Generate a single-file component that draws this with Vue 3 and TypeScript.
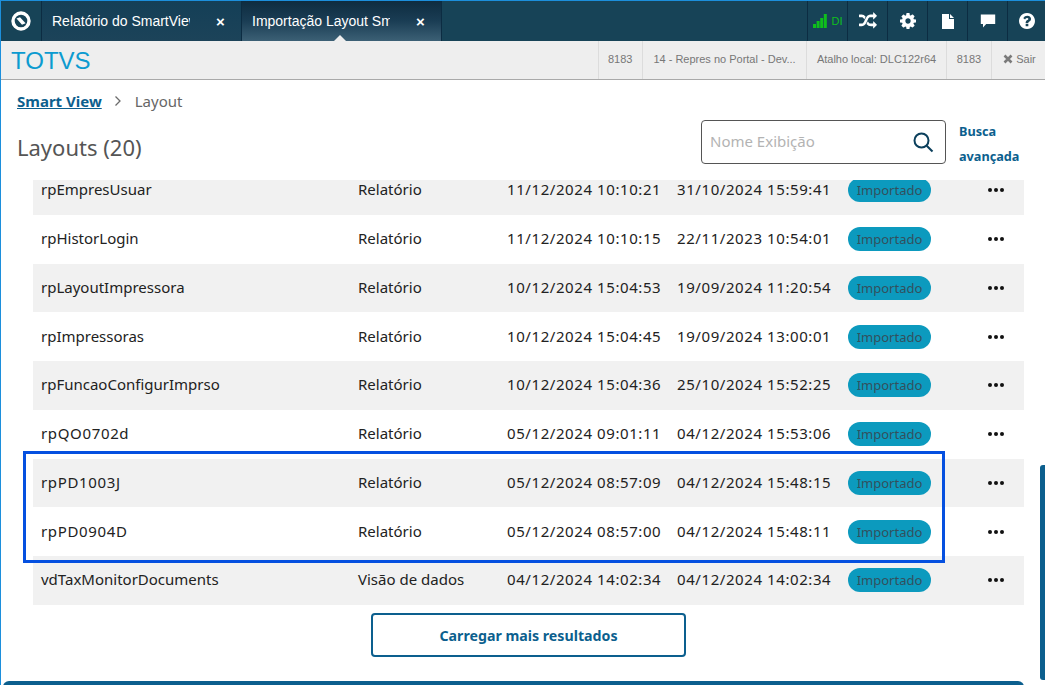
<script setup lang="ts">
interface Row { name: string; type: string; created: string; updated: string }
const rows: Row[] = [
  { name: 'rpEmpresUsuar', type: 'Relatório', created: '11/12/2024 10:10:21', updated: '31/10/2024 15:59:41' },
  { name: 'rpHistorLogin', type: 'Relatório', created: '11/12/2024 10:10:15', updated: '22/11/2023 10:54:01' },
  { name: 'rpLayoutImpressora', type: 'Relatório', created: '10/12/2024 15:04:53', updated: '19/09/2024 11:20:54' },
  { name: 'rpImpressoras', type: 'Relatório', created: '10/12/2024 15:04:45', updated: '19/09/2024 13:00:01' },
  { name: 'rpFuncaoConfigurImprso', type: 'Relatório', created: '10/12/2024 15:04:36', updated: '25/10/2024 15:52:25' },
  { name: 'rpQO0702d', type: 'Relatório', created: '05/12/2024 09:01:11', updated: '04/12/2024 15:53:06' },
  { name: 'rpPD1003J', type: 'Relatório', created: '05/12/2024 08:57:09', updated: '04/12/2024 15:48:15' },
  { name: 'rpPD0904D', type: 'Relatório', created: '05/12/2024 08:57:00', updated: '04/12/2024 15:48:11' },
  { name: 'vdTaxMonitorDocuments', type: 'Visão de dados', created: '04/12/2024 14:02:34', updated: '04/12/2024 14:02:34' }
]
const hasDigits = (s: string): boolean => /\d/.test(s)
const tabs = [
  { label: 'Relatório do SmartView', active: false },
  { label: 'Importação Layout SmartView', active: true }
]
const infos = [
  { text: '8183', w: 44.5 },
  { text: '14 - Repres no Portal - Dev...', w: 164 },
  { text: 'Atalho local: DLC122r64', w: 140 },
  { text: '8183', w: 45 }
]
</script>

<template>
  <div class="app">
    <header class="topbar">
      <div class="logo-cell">
        <svg width="20" height="20" viewBox="0 0 20 20">
          <circle cx="10" cy="10" r="8" fill="none" stroke="#fff" stroke-width="3.4" />
          <path d="M5.5 7.6 L9 6.2 L14.6 12.2 L11 13.8 Z" fill="#fff" />
        </svg>
      </div>
      <div v-for="t in tabs" :key="t.label" class="tab" :class="{ active: t.active }">
        <span class="tab-label">{{ t.label }}</span>
        <span class="tab-close">×</span>
      </div>
      <div class="tool-spacer"></div>
      <div class="tool signal">
        <svg width="14" height="14" viewBox="0 0 14 14" fill="#0fbf1c">
          <rect x="0" y="10" width="3" height="4" /><rect x="3.6" y="7" width="3" height="7" />
          <rect x="7.2" y="4" width="3" height="10" /><rect x="10.8" y="0" width="3" height="14" />
        </svg>
        <span class="signal-text">DI</span>
      </div>
      <div class="tool">
        <svg width="18" height="18" viewBox="0 0 1792 1792" fill="#fff"><path d="M666 481q-60 92-137 273-22-45-37-72.5t-40.5-63.5-51-56.5-63-35-81.5-14.5h-224q-14 0-23-9t-9-23v-192q0-14 9-23t23-9h224q250 0 410 225zm1126 799q0 14-9 23l-320 320q-9 9-23 9-13 0-22.5-9.5t-9.5-22.5v-192q-32 0-85 .5t-81 1-73-1-71-5-64-10.5-63-18.5-58-28.5-59-40-55-53.5-56-69.5q59-93 136-273 22 45 37 72.5t40.5 63.5 51 56.5 63 35 81.5 14.5h256v-192q0-14 9-23t23-9q12 0 24 10l319 319q9 9 9 23zm0-896q0 14-9 23l-320 320q-9 9-23 9-13 0-22.5-9.5t-9.5-22.5v-192h-256q-48 0-87 15t-69 45-51 61.5-45 77.5q-32 62-78 171-29 66-49.5 111t-54 105-64 100-74 83-90 68.5-106.5 42-128 16.5h-224q-14 0-23-9t-9-23v-192q0-14 9-23t23-9h224q48 0 87-15t69-45 51-61.5 45-77.5q32-62 78-171 29-66 49.5-111t54-105 64-100 74-83 90-68.5 106.5-42 128-16.5h256v-192q0-14 9-23t23-9q12 0 24 10l319 319q9 9 9 23z" /></svg>
      </div>
      <div class="tool">
        <svg width="16" height="16" viewBox="128 128 1536 1536" fill="#fff"><path d="M1152 896q0-106-75-181t-181-75-181 75-75 181 75 181 181 75 181-75 75-181zm512-109v222q0 12-8 23t-20 13l-185 28q-19 54-39 91 35 50 107 138 10 12 10 25t-9 23q-27 37-99 108t-94 71q-12 0-26-9l-138-108q-44 23-91 38-16 136-29 186-7 28-36 28h-222q-14 0-24.5-8.5t-11.5-21.5l-28-184q-49-16-90-37l-141 107q-10 9-25 9-14 0-25-11-126-114-165-168-7-10-7-23 0-12 8-23 15-21 51-66.5t54-70.5q-27-50-41-99l-183-27q-13-2-21-12.5t-8-23.5v-222q0-12 8-23t19-13l186-28q14-46 39-92-40-57-107-138-10-12-10-24 0-10 9-23 26-36 98.5-107.5t94.5-71.5q13 0 26 10l138 107q44-23 91-38 16-136 29-186 7-28 36-28h222q14 0 24.5 8.5t11.5 21.5l28 184q49 16 90 37l142-107q9-9 24-9 13 0 25 10 129 119 165 170 7 8 7 22 0 12-8 23-15 21-51 66.5t-54 70.5q26 50 41 98l183 28q13 2 21 12.5t8 23.5z" /></svg>
      </div>
      <div class="tool">
        <svg width="12" height="15" viewBox="0 0 12 15" fill="#fff"><path d="M0 0 H7 V5 H12 V15 H0 Z M8 0 L12 4 H8 Z" /></svg>
      </div>
      <div class="tool">
        <svg width="16" height="14" viewBox="0 0 16 14" fill="#fff"><path d="M0.8 0.5 H15.2 V10 H6.2 L3 13.4 V10 H0.8 Z" /></svg>
      </div>
      <div class="tool">
        <svg width="16" height="16" viewBox="128 128 1536 1536" fill="#fff"><path d="M1024 1376v-192q0-14-9-23t-23-9h-192q-14 0-23 9t-9 23v192q0 14 9 23t23 9h192q14 0 23-9t9-23zm256-672q0-88-55.5-163t-138.5-116-170-41q-243 0-371 213-15 24 8 42l132 100q7 6 19 6 16 0 25-12 53-68 86-92 34-24 86-24 48 0 85.5 26t37.5 59q0 38-20 61t-68 45q-63 28-115.5 86.5t-52.5 125.5v36q0 14 9 23t23 9h192q14 0 23-9t9-23q0-19 21.5-49.5t54.5-49.5q32-18 49-28.5t46-35 44.5-48 28-60.5 12.5-81zm384 192q0 209-103 385.5t-279.5 279.5-385.5 103-385.5-103-279.5-279.5-103-385.5 103-385.5 279.5-279.5 385.5-103 385.5 103 279.5 279.5 103 385.5z" /></svg>
      </div>
    </header>

    <div class="subbar">
      <div class="brand">TOTVS</div>
      <div v-for="(i, idx) in infos" :key="idx" class="info" :style="{ width: i.w + 'px' }">{{ i.text }}</div>
      <div class="info exit">
        <svg width="10" height="10" viewBox="0 0 10 10"><path d="M1.5 1.5 L8.5 8.5 M8.5 1.5 L1.5 8.5" stroke="#7a7a7a" stroke-width="2.6" /></svg>
        <span>Sair</span>
      </div>
    </div>

    <main class="content">
      <nav class="crumbs">
        <a class="crumb-link">Smart View</a>
        <svg width="8" height="12" viewBox="0 0 8 12"><path d="M1.5 1.5 L6 6 L1.5 10.5" fill="none" stroke="#6b6b6b" stroke-width="1.3" /></svg>
        <span class="crumb-current">Layout</span>
      </nav>

      <div class="head">
        <h1 class="title">Layouts (20)</h1>
        <div class="search">
          <span class="placeholder">Nome Exibição</span>
          <svg width="22" height="22" viewBox="0 0 22 22" fill="none" stroke="#0b3f5c" stroke-width="2"><circle cx="9.5" cy="9.5" r="7" /><path d="M14.7 14.7 L20.5 20.5" /></svg>
        </div>
        <a class="advanced">Busca<br />avançada</a>
      </div>

      <div class="table-view">
        <div class="rows">
          <div v-for="r in rows" :key="r.name" class="row">
            <span class="cell" :class="{ digits: hasDigits(r.name) }">{{ r.name }}</span>
            <span class="cell">{{ r.type }}</span>
            <span class="cell date">{{ r.created }}</span>
            <span class="cell date">{{ r.updated }}</span>
            <span class="pill">Importado</span>
            <span class="dots"><i></i><i></i><i></i></span>
          </div>
        </div>
      </div>

      <div class="more-wrap">
        <button class="more" type="button">Carregar mais resultados</button>
      </div>
      <div class="bottom-bar"></div>

      <div class="highlight"></div>
      <div class="scroll-thumb"></div>
    </main>
  </div>
</template>

<style>
html, body { margin: 0; overflow: hidden; background: #fff; }
</style>

<style scoped>
.app {
  width: 1045px; height: 685px; box-sizing: border-box; overflow: hidden;
  display: flex; flex-direction: column;
  border-top: 1px solid #1c8fdc; border-left: 1px solid #1c8fdc;
  font-family: "Liberation Sans", Arial, sans-serif; background: #fff;
}
.topbar { display: flex; height: 40px; flex: none; background: #174357; }
.logo-cell { width: 40px; display: flex; align-items: center; justify-content: center; border-right: 1px solid #0c2c42; }
.tab {
  width: 199px; display: flex; align-items: center; position: relative;
  border-right: 1px solid #0c2c42; color: #fff;
  background: linear-gradient(#143f57, #1c4359);
}
.tab.active { background: linear-gradient(#0e2c40 0%, #1a3d54 50%, #3c6075 100%); }
.tab.active::after {
  content: ""; position: absolute; left: 92px; bottom: 0; width: 0; height: 0;
  border-left: 6px solid transparent; border-right: 6px solid transparent; border-bottom: 6px solid #eee;
}
.tab-label { margin-left: 10px; width: 138px; overflow: hidden; white-space: nowrap; font-size: 14px; }
.tab-close { margin-left: 26px; font-size: 15px; font-weight: 700; line-height: 1; }
.tool-spacer { flex: 1; }
.tool {
  width: 39px; flex: none; display: flex; align-items: center; justify-content: center;
  border-left: 1px solid #0c2c42;
}
.tool:last-child { width: 37px; }
.signal { gap: 5px; }
.signal-text { color: #0fbf1c; font-size: 11px; }
.subbar {
  height: 38px; flex: none; display: flex; align-items: stretch; background: #eee;
  border-bottom: 1px solid #a9a9a9; color: #777; font-size: 11px;
}
.brand { flex: 1; align-self: center; padding-left: 10px; color: #0c9bd0; font-size: 24px; line-height: 1; margin-top: 2px; }
.info {
  box-sizing: border-box; display: flex; align-items: center; justify-content: center;
  border-left: 1px solid #dcdcdc; white-space: nowrap; padding-bottom: 2px;
}
.exit { width: 54px; gap: 3px; padding-left: 2px; }
.content { flex: 1; position: relative; min-height: 0; display: flex; flex-direction: column; font-family: "Noto Sans", sans-serif; }
.crumbs { display: flex; align-items: center; gap: 12px; padding: 11px 0 0 16px; height: 20px; font-size: 15px; }
.crumb-link { color: #0c5f8e; font-weight: 700; text-decoration: underline; }
.crumb-current { color: #666; margin-left: 1px; }
.head { display: flex; align-items: flex-start; height: 52px; padding-top: 9px; }
.title { flex: 1; margin: 0; padding: 14px 0 0 16px; font-size: 22px; font-weight: 400; color: #555; line-height: 1.2; }
.search {
  width: 245px; height: 44px; box-sizing: border-box; display: flex; align-items: center; justify-content: space-between;
  padding: 0 11px 0 8px; border: 1px solid #555; border-radius: 4px; background: #fff;
}
.placeholder { color: #b3b3b3; font-size: 15px; padding-bottom: 2px; }
.advanced { width: 99px; box-sizing: border-box; padding: 0 0 0 13px; color: #0c5f8e; font-size: 12.7px; font-weight: 700; line-height: 25px; margin-top: -1px; }
.table-view { margin: 11px 21px 0 32px; height: 425px; overflow: hidden; flex: none; }
.rows { margin-top: -14px; }
.row {
  height: 48.75px; display: grid; grid-template-columns: 317px 149px 170px 171px 140px 1fr;
  align-items: center; padding-left: 8px; box-sizing: border-box; font-size: 15px; color: #222;
}
.row:nth-child(odd) { background: #f1f1f1; }
.cell { padding-bottom: 2px; white-space: nowrap; }
.digits { letter-spacing: 0.65px; }
.date { letter-spacing: 0.58px; }
.pill {
  width: 83px; height: 24px; box-sizing: border-box; border-radius: 12px; background: #0c9abe; color: #33505d;
  display: flex; align-items: center; justify-content: center; font-size: 13px;
}
.dots { display: flex; gap: 2px; }
.dots i { width: 4px; height: 4px; border-radius: 50%; background: #111; }
.more-wrap { display: flex; justify-content: center; padding: 8px 0 0; margin-left: 11px; }
.more {
  width: 315px; height: 44px; box-sizing: border-box; border: 2px solid #0c5f8e; border-radius: 4px; background: #fff;
  color: #0c5f8e; font: 700 14.2px "Noto Sans", sans-serif;
}
.bottom-bar { margin: 24px 21px 0 2px; height: 8px; flex: none; background: #0c5f8e; border-radius: 6px 6px 0 0; }
.highlight { position: absolute; left: 22px; top: 371px; width: 922px; height: 112px; box-sizing: border-box; border: 3px solid #0550e0; pointer-events: none; }
.scroll-thumb { position: absolute; left: 1039px; top: 385px; width: 5px; height: 215px; border-radius: 3px 0 0 3px; background: #0c5f8e; }
</style>
